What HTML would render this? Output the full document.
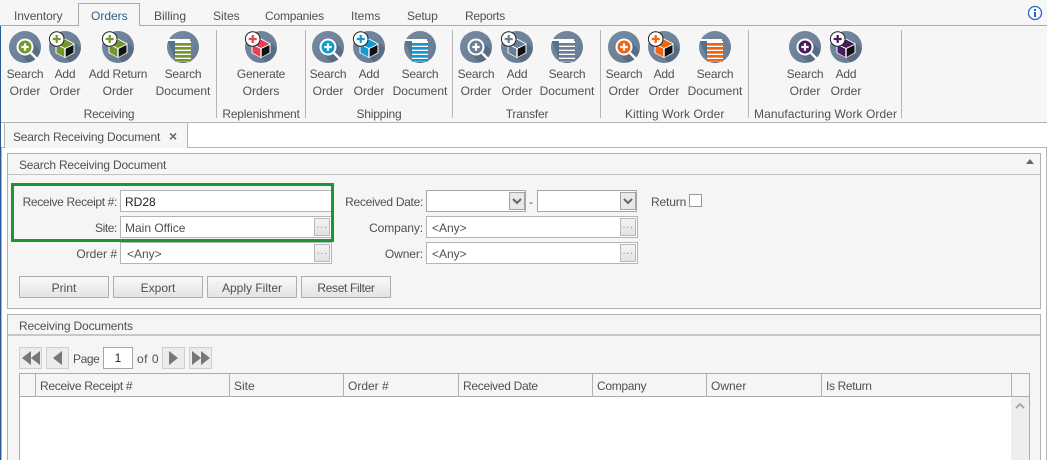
<!DOCTYPE html>
<html><head><meta charset="utf-8"><style>
html,body{margin:0;padding:0}
body{width:1047px;height:460px;position:relative;overflow:hidden;background:#fff;font:12px/16px "Liberation Sans",sans-serif;color:#505050}
div,span.t{position:absolute;box-sizing:border-box}
.t{white-space:nowrap}
.c{width:110px;text-align:center}
.c::first-line{letter-spacing:-.22px}
.r{width:130px;text-align:right}
.box{background:#fff;border:1px solid #b4b4b4}
.dots{width:16px;height:18px;background:linear-gradient(#f4f4f4,#e2e2e2);border:1px solid #b9b9b9;color:#999;font-size:11px;line-height:12px;text-align:center;letter-spacing:.6px}
.btn{height:22px;width:90px;top:276px;background:linear-gradient(#f9f9f9,#e3e3e3);border:1px solid #adadad;text-align:center;line-height:22px}
.dd{width:16px;height:18px;top:192px;background:#e8e8e8;border:1px solid #a5a5a5}
.pg{width:23px;height:22px;top:347px;background:#ececec;border:1px solid #cfcfcf}
.vl{width:1px;top:374px;height:23px;background:#b0b0b0}
.sep{width:1px;top:30px;height:88px;background:#b5b5b5}
svg.i{position:absolute;top:25px;width:44px;height:44px}
</style></head><body>
<svg width="0" height="0" style="position:absolute">
<defs>
<clipPath id="cc"><circle cx="0" cy="0" r="16"/></clipPath>
<linearGradient id="bg" x1="0" y1="0" x2="1" y2="1"><stop offset="0" stop-color="#768aa1"/><stop offset="1" stop-color="#667a91"/></linearGradient>
<symbol id="s" viewBox="-22 -22 44 44">
<circle r="16" fill="url(#bg)"/>
<path clip-path="url(#cc)" d="M-6 6L6 -6L20 8V20H8Z" fill="#586c82"/>
<path d="M6 6L13.500 13.500" stroke="#fff" stroke-width="2.500"/>
<circle r="8.500" fill="#fff"/><circle r="6.500" fill="currentColor"/>
<path d="M-3.700 0H3.700M0 -3.700V3.700" stroke="#fff" stroke-width="2.200"/>
</symbol>
<symbol id="a" viewBox="-22 -22 44 44">
<circle r="16" fill="url(#bg)"/>
<path clip-path="url(#cc)" d="M0 10L10 -4L20 6V20H8Z" fill="#586c82"/>
<path d="M0 -8.500L9.500 -3.500V6L0 11L-9.500 6V-3.500Z" fill="#fff"/>
<path d="M0 -7.500L8.500 -3L0 1L-8.500 -3Z" fill="currentColor"/>
<path d="M-8.500 -2L-.7 1.800V10L-8.500 5.600Z" fill="currentColor"/>
<path d="M.7 1.800L8.500 -2V5.600L.7 10Z" fill="#111"/>
<circle cx="-8.300" cy="-8" r="7.300" fill="#fff" stroke="#222" stroke-width="1"/>
<path d="M-12.300 -8H-4.300M-8.300 -12V-4" stroke="currentColor" stroke-width="2.200"/>
</symbol>
<symbol id="d" viewBox="-22 -22 44 44">
<circle r="16" fill="url(#bg)"/>
<path clip-path="url(#cc)" d="M-16 -7H8V15L-4 20Z" fill="#5c7086"/>
<rect x="-15" y="-8" width="22" height="2" fill="#fff"/>
<rect x="-8" y="-6" width="16" height="21" fill="#fff"/>
<rect x="-8" y="-4" width="16" height="2.700" fill="currentColor"/>
<rect x="-8" y="0" width="16" height="2.700" fill="currentColor"/>
<rect x="-8" y="4" width="16" height="2.700" fill="currentColor"/>
<rect x="-8" y="8" width="16" height="2.700" fill="currentColor"/>
<rect x="-8" y="12" width="16" height="2.700" fill="currentColor"/>
</symbol>
</defs></svg>

<!-- top bar -->
<div style="left:0;top:0;width:1047px;height:122px;background:#f6f6f6"></div>
<div style="left:0;top:25px;width:1047px;height:1px;background:#ababab"></div>
<div style="left:78px;top:3px;width:62px;height:23px;background:#f6f6f6;border:1px solid #ababab;border-bottom:0"></div>
<span class="t" style="position:absolute;left:14px;top:8px;letter-spacing:-.1px">Inventory</span>
<span class="t" style="position:absolute;left:91px;top:8px;color:#2f5d8c">Orders</span>
<span class="t" style="position:absolute;left:154px;top:8px">Billing</span>
<span class="t" style="position:absolute;left:213px;top:8px">Sites</span>
<span class="t" style="position:absolute;left:265px;top:8px;letter-spacing:-.2px">Companies</span>
<span class="t" style="position:absolute;left:351px;top:8px">Items</span>
<span class="t" style="position:absolute;left:407px;top:8px;letter-spacing:-.15px">Setup</span>
<span class="t" style="position:absolute;left:465px;top:8px;letter-spacing:-.3px">Reports</span>
<svg style="position:absolute;left:1027px;top:5px" width="16" height="16" viewBox="0 0 16 16"><circle cx="8" cy="8" r="6.500" fill="#fff" stroke="#2a62c9" stroke-width="1.300"/><rect x="7" y="7" width="2" height="5" fill="#2a62c9"/><rect x="7" y="4" width="2" height="2" fill="#2a62c9"/></svg>

<!-- separators -->
<div class="sep" style="left:216px"></div><div class="sep" style="left:305px"></div><div class="sep" style="left:452px"></div><div class="sep" style="left:600px"></div><div class="sep" style="left:748px"></div><div class="sep" style="left:901px"></div>

<!-- icons -->
<svg class="i" style="left:3px;color:#76962b"><use href="#s"/></svg>
<svg class="i" style="left:43px;color:#76962b"><use href="#a"/></svg>
<svg class="i" style="left:96px;color:#76962b"><use href="#a"/></svg>
<svg class="i" style="left:161px;color:#76962b"><use href="#d"/></svg>
<svg class="i" style="left:239px;color:#ea3f55"><use href="#a"/></svg>
<svg class="i" style="left:306px;color:#0f9ad6"><use href="#s"/></svg>
<svg class="i" style="left:347px;color:#0f9ad6"><use href="#a"/></svg>
<svg class="i" style="left:398px;color:#0f9ad6"><use href="#d"/></svg>
<svg class="i" style="left:454px;color:#6a7f96"><use href="#s"/></svg>
<svg class="i" style="left:495px;color:#6a7f96"><use href="#a"/></svg>
<svg class="i" style="left:545px;color:#6a7f96"><use href="#d"/></svg>
<svg class="i" style="left:602px;color:#f0650e"><use href="#s"/></svg>
<svg class="i" style="left:642px;color:#f0650e"><use href="#a"/></svg>
<svg class="i" style="left:693px;color:#f0650e"><use href="#d"/></svg>
<svg class="i" style="left:783px;color:#4a1a5c"><use href="#s"/></svg>
<svg class="i" style="left:824px;color:#4a1a5c"><use href="#a"/></svg>

<!-- ribbon labels -->
<div class="t c" style="left:-30px;top:66px;line-height:17px">Search<br>Order</div>
<div class="t c" style="left:10px;top:66px;line-height:17px">Add<br>Order</div>
<div class="t c" style="left:63px;top:66px;line-height:17px">Add Return<br>Order</div>
<div class="t c" style="left:128px;top:66px;line-height:17px">Search<br>Document</div>
<div class="t c" style="left:206px;top:66px;line-height:17px">Generate<br>Orders</div>
<div class="t c" style="left:273px;top:66px;line-height:17px">Search<br>Order</div>
<div class="t c" style="left:314px;top:66px;line-height:17px">Add<br>Order</div>
<div class="t c" style="left:365px;top:66px;line-height:17px">Search<br>Document</div>
<div class="t c" style="left:421px;top:66px;line-height:17px">Search<br>Order</div>
<div class="t c" style="left:462px;top:66px;line-height:17px">Add<br>Order</div>
<div class="t c" style="left:512px;top:66px;line-height:17px">Search<br>Document</div>
<div class="t c" style="left:569px;top:66px;line-height:17px">Search<br>Order</div>
<div class="t c" style="left:609px;top:66px;line-height:17px">Add<br>Order</div>
<div class="t c" style="left:660px;top:66px;line-height:17px">Search<br>Document</div>
<div class="t c" style="left:750px;top:66px;line-height:17px">Search<br>Order</div>
<div class="t c" style="left:791px;top:66px;line-height:17px">Add<br>Order</div>

<div class="t c" style="left:54px;top:106px">Receiving</div>
<div class="t c" style="left:206px;top:106px">Replenishment</div>
<div class="t c" style="left:324px;top:106px">Shipping</div>
<div class="t c" style="left:472px;top:106px">Transfer</div>
<div class="t" style="left:625px;top:106px;letter-spacing:.05px">Kitting Work Order</div>
<div class="t" style="left:754px;top:106px;letter-spacing:.08px">Manufacturing Work Order</div>

<!-- doc tab strip -->
<div style="left:0;top:122px;width:1047px;height:1px;background:#b4b4b4"></div>
<div style="left:0;top:26px;width:1px;height:434px;background:#2b579a"></div>
<div style="left:1px;top:147px;width:1046px;height:313px;border-left:1px solid #b4b4b4;border-top:1px solid #b4b4b4;border-right:1px solid #b4b4b4"></div>
<div style="left:4px;top:123px;width:184px;height:25px;background:#f6f6f6;border:1px solid #b4b4b4;border-top:0;border-bottom:0"></div>
<span class="t" style="position:absolute;left:13px;top:129px;letter-spacing:-.2px">Search Receiving Document</span>
<span class="t" style="position:absolute;left:169px;top:128px;font-size:14px;font-weight:bold;color:#666">×</span>

<!-- panel 1 -->
<div style="left:7px;top:153px;width:1034px;height:156px;background:#f5f5f5;border:1px solid #b0b0b0"></div>
<div style="left:8px;top:174px;width:1032px;height:1px;background:#c4c4c4"></div>
<span class="t" style="position:absolute;left:19px;top:157px;letter-spacing:-.2px">Search Receiving Document</span>
<svg style="position:absolute;left:1025px;top:158px" width="10" height="7"><path d="M1 6L5 1L9 6Z" fill="#666"/></svg>

<div class="t r" style="left:-13px;top:194px;letter-spacing:-.35px">Receive Receipt #:</div>
<div class="t r" style="left:-13px;top:220px;letter-spacing:-.4px">Site:</div>
<div class="t r" style="left:-13px;top:246px">Order #</div>
<div class="box" style="left:120px;top:190px;width:212px;height:22px"></div>
<div class="box" style="left:120px;top:216px;width:212px;height:22px"></div>
<div class="box" style="left:120px;top:242px;width:212px;height:22px"></div>
<div class="dots" style="left:314px;top:218px">...</div>
<div class="dots" style="left:314px;top:244px">...</div>
<span class="t" style="position:absolute;left:125px;top:194px;color:#222">RD28</span>
<span class="t" style="position:absolute;left:125px;top:220px">Main Office</span>
<span class="t" style="position:absolute;left:127px;top:246px">&lt;Any&gt;</span>
<div style="left:11px;top:183px;width:323px;height:59px;border:3px solid #1a9632"></div>

<div class="t r" style="left:293px;top:194px;letter-spacing:-.3px">Received Date:</div>
<div class="t r" style="left:293px;top:220px;letter-spacing:-.1px">Company:</div>
<div class="t r" style="left:293px;top:246px;letter-spacing:-.1px">Owner:</div>
<div class="box" style="left:426px;top:190px;width:100px;height:22px;border-color:#a5a5a5"></div>
<div class="dd" style="left:509px"><svg width="14" height="16" style="position:absolute;left:0;top:0"><path d="M3 6L7 10L11 6" fill="none" stroke="#666" stroke-width="2"/></svg></div>
<span class="t" style="position:absolute;left:529px;top:194px">-</span>
<div class="box" style="left:537px;top:190px;width:100px;height:22px;border-color:#a5a5a5"></div>
<div class="dd" style="left:620px"><svg width="14" height="16" style="position:absolute;left:0;top:0"><path d="M3 6L7 10L11 6" fill="none" stroke="#666" stroke-width="2"/></svg></div>
<span class="t" style="position:absolute;left:651px;top:194px;letter-spacing:-.15px">Return</span>
<div class="box" style="left:689px;top:194px;width:13px;height:13px;border-color:#999"></div>
<div class="box" style="left:426px;top:216px;width:212px;height:22px"></div>
<div class="box" style="left:426px;top:242px;width:212px;height:22px"></div>
<div class="dots" style="left:620px;top:218px">...</div>
<div class="dots" style="left:620px;top:244px">...</div>
<span class="t" style="position:absolute;left:432px;top:220px">&lt;Any&gt;</span>
<span class="t" style="position:absolute;left:432px;top:246px">&lt;Any&gt;</span>

<div class="btn" style="left:19px">Print</div>
<div class="btn" style="left:113px">Export</div>
<div class="btn" style="left:207px">Apply Filter</div>
<div class="btn" style="left:301px;letter-spacing:-.35px">Reset Filter</div>

<!-- panel 2 -->
<div style="left:7px;top:314px;width:1034px;height:146px;background:#f5f5f5;border:1px solid #b0b0b0;border-bottom:0"></div>
<div style="left:8px;top:334px;width:1032px;height:2px;background:#c8c8c8"></div>
<span class="t" style="position:absolute;left:19px;top:318px;letter-spacing:-.15px">Receiving Documents</span>

<div class="pg" style="left:19px"><svg width="21" height="20" style="position:absolute;left:0;top:0"><path d="M11 3V17L2 10ZM20 3V17L11 10Z" fill="#777"/></svg></div>
<div class="pg" style="left:46px"><svg width="21" height="20" style="position:absolute;left:0;top:0"><path d="M15 3V17L6 10Z" fill="#777"/></svg></div>
<span class="t" style="position:absolute;left:73px;top:351px;letter-spacing:-.4px">Page</span>
<div class="box" style="left:103px;top:347px;width:30px;height:22px;border-color:#a5a5a5;text-align:center;line-height:21px;color:#223">1</div>
<span class="t" style="position:absolute;left:137px;top:351px;letter-spacing:.5px">of 0</span>
<div class="pg" style="left:162px"><svg width="21" height="20" style="position:absolute;left:0;top:0"><path d="M6 3V17L15 10Z" fill="#777"/></svg></div>
<div class="pg" style="left:189px"><svg width="21" height="20" style="position:absolute;left:0;top:0"><path d="M2 3V17L11 10ZM11 3V17L20 10Z" fill="#777"/></svg></div>

<div style="left:19px;top:373px;width:1011px;height:87px;background:#fff;border:1px solid #ababab;border-bottom:0"></div>
<div style="left:20px;top:374px;width:1009px;height:23px;background:#f5f5f5;border-bottom:1px solid #ababab"></div>
<div class="vl" style="left:35px"></div><div class="vl" style="left:229px"></div><div class="vl" style="left:343px"></div><div class="vl" style="left:458px"></div><div class="vl" style="left:592px"></div><div class="vl" style="left:706px"></div><div class="vl" style="left:821px"></div><div class="vl" style="left:1011px"></div>
<span class="t" style="position:absolute;left:40px;top:378px;letter-spacing:-.3px">Receive Receipt #</span>
<span class="t" style="position:absolute;left:234px;top:378px">Site</span>
<span class="t" style="position:absolute;left:348px;top:378px">Order #</span>
<span class="t" style="position:absolute;left:463px;top:378px;letter-spacing:-.3px">Received Date</span>
<span class="t" style="position:absolute;left:597px;top:378px;letter-spacing:-.3px">Company</span>
<span class="t" style="position:absolute;left:711px;top:378px">Owner</span>
<span class="t" style="position:absolute;left:826px;top:378px;letter-spacing:-.35px">Is Return</span>
<div style="left:1011px;top:397px;width:18px;height:63px;background:#eee"></div>
<svg style="position:absolute;left:1015px;top:402px" width="10" height="7"><path d="M1 6L5 2L9 6" fill="none" stroke="#aaa" stroke-width="2"/></svg>
</body></html>
